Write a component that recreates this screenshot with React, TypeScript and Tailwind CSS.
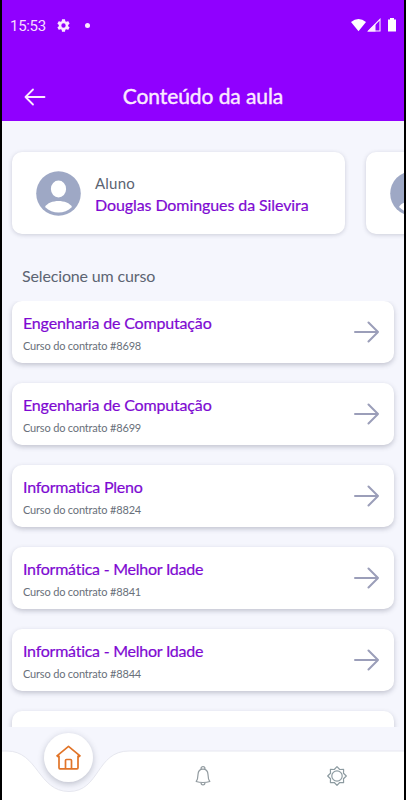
import React from "react";

const courses = [
  { name: "Engenharia de Computação", id: "8698", ls: "tracking-[-0.17px]" },
  { name: "Engenharia de Computação", id: "8699", ls: "tracking-[-0.17px]" },
  { name: "Informatica Pleno", id: "8824", ls: "tracking-[-0.23px]" },
  { name: "Informática - Melhor Idade", id: "8841", ls: "tracking-[-0.25px]" },
  { name: "Informática - Melhor Idade", id: "8844", ls: "tracking-[-0.25px]" },
];

function Avatar() {
  return (
    <svg className="h-[45px] w-[45px] shrink-0" viewBox="0 0 45 45">
      <circle cx="22.5" cy="22.5" r="22.3" fill="#9ea8c5" />
      <ellipse cx="22.5" cy="18" rx="7.6" ry="8.4" fill="#fff" />
      <path d="M9 36C11 32 17 30 22.5 30S34 32 36 36C32 40 27.500 41.500 22.500 41.500S13 40 9 36Z" fill="#fff" />
    </svg>
  );
}

function StatusBar() {
  return (
    <div className="flex h-[50px] items-center pl-[8px] pr-[7px] text-white">
      <span className="mt-[2px] w-[37px] whitespace-nowrap font-['Roboto',sans-serif] text-[15px] leading-5 tracking-[-0.3px] text-[#f6dcff]">15:53</span>
      <svg className="ml-[9px] h-[15px] w-[15px]" viewBox="0 0 24 24" fill="#fbeaff">
        <path d="M19.430 13a7.800 7.800 0 0 0 0-2l2.100-1.650a.5.500 0 0 0 .12-.64l-2-3.460a.5.500 0 0 0-.61-.22l-2.490 1a7.300 7.300 0 0 0-1.690-.98l-.38-2.650A.5.500 0 0 0 14 2h-4a.5.500 0 0 0-.49.420l-.38 2.650c-.61.250-1.170.59-1.690.98l-2.490-1a.5.500 0 0 0-.61.220l-2 3.460a.5.500 0 0 0 .12.640L4.570 11a7.900 7.900 0 0 0 0 2l-2.110 1.650a.5.500 0 0 0-.12.640l2 3.460c.12.220.39.300.61.220l2.490-1c.52.400 1.080.73 1.690.98l.38 2.650c.03.240.24.420.49.420h4c.25 0 .46-.18.490-.42l.38-2.650c.61-.25 1.170-.59 1.690-.98l2.490 1c.23.090.49 0 .61-.22l2-3.460a.5.500 0 0 0-.12-.64ZM12 15.500a3.500 3.500 0 1 1 0-7 3.500 3.500 0 0 1 0 7Z" />
      </svg>
      <span className="ml-[14px] h-[5px] w-[5px] rounded-full bg-[#fbeaff]" />
      <svg className="ml-auto h-[14px] w-[46px]" viewBox="0 0 46 14">
        <path d="M0 4Q7.500-2 15 4L7.500 13.300Z" fill="#fff" />
        <path d="M17.500 13 29 1.300V13Z" fill="none" stroke="#fbeaff" strokeWidth="1.100" />
        <path d="M16.500 13.500 24.500 5.500V13.500Z" fill="#fbeaff" />
        <path d="M37 1.500H39V0H43V1.500H45V13.500H37Z" fill="#fff" />
      </svg>
    </div>
  );
}

function CourseCard({ name, id, ls }: { name: string; id: string; ls: string }) {
  return (
    <div className="flex h-[62px] shrink-0 items-center justify-between rounded-[10px] bg-white pl-[11px] pr-[15px] shadow-[0_2px_5px_rgba(60,65,90,0.28)]">
      <div>
        <div className={"mt-px whitespace-nowrap text-[16px] leading-[22px] text-[#7e09d2] [-webkit-text-stroke:0.2px_#7e09d2] " + ls}>{name}</div>
        <div className="mt-[4px] whitespace-nowrap text-[11px] leading-4 tracking-[-0.17px] text-[#69707a]">Curso do contrato #{id}</div>
      </div>
      <svg className="h-[22px] w-[25px]" viewBox="0 0 25 22" fill="none" stroke="#9b9eb9" strokeWidth="2" strokeLinecap="round" strokeLinejoin="round">
        <path d="M1 11H24M14.500 1.500 24 11 14.500 20.500" />
      </svg>
    </div>
  );
}

function BottomNav() {
  return (
    <div className="relative h-[73px] shrink-0">
      <svg className="h-[73px] w-[402px]" viewBox="0 0 402 73">
        <path d="M-1 24H5C36 24 36 64.500 67 64.500S94 24 127 24H403V74H-1Z" fill="#fff" stroke="#e6e7ef" strokeWidth="1" />
      </svg>
      <div className="absolute left-[42px] top-[6px] flex h-[49px] w-[49px] items-center justify-center rounded-full bg-white shadow-[0_2px_6px_rgba(60,65,90,0.3)]">
        <svg className="h-[25px] w-[25px]" viewBox="0 0 25 25" fill="none" stroke="#e17428" strokeWidth="1.700" strokeLinejoin="round" strokeLinecap="round">
          <path d="M3 12.200 1 10.800 12.500 1.300 24 10.800 22 12.200M3 11V22.800Q3 23.800 4 23.800H21Q22 23.800 22 22.800V11M9.500 23.500V15.500Q9.500 14.500 10.500 14.500H14.500Q15.500 14.500 15.500 15.500V23.500" />
        </svg>
      </div>
      <svg className="absolute left-[193px] top-[39px] h-5 w-4" viewBox="0 0 16 20" fill="none" stroke="#929ba0" strokeWidth="1.200" strokeLinejoin="round">
        <path d="M6 2.700a2 2 0 1 1 4 0M1.200 15.500C2.900 13.500 2.900 12 3 8.500C3.200 5 5 3.200 8 3.200S12.800 5 13 8.500C13.100 12 13.100 13.500 14.800 15.500Q12 16.500 8 16.500T1.200 15.500ZM6 16.600Q6 19 8 19T10 16.600" />
      </svg>
      <svg className="absolute left-[325px] top-[39px] h-5 w-5" viewBox="0 0 20 20" fill="none" stroke="#8d9ba1" strokeWidth="1.200" strokeLinejoin="round">
        <path d="M10 .700 12.700 3.500 16.600 3.400 16.500 7.300 19.300 10 16.500 12.700 16.600 16.600 12.700 16.500 10 19.300 7.300 16.500 3.400 16.600 3.500 12.700.700 10 3.500 7.300 3.400 3.400 7.300 3.500Z" />
        <circle cx="10" cy="10" r="5.200" />
      </svg>
    </div>
  );
}

export default function App() {
  return (
    <div className="h-[800px] w-[406px] overflow-hidden bg-black pl-[2px] pr-[2px] font-['Lato',sans-serif]">
      <div className="flex h-full w-[402px] flex-col overflow-hidden bg-[#f5f6fd]">
        <header className="h-[121px] shrink-0 bg-[#9000ff]">
          <StatusBar />
          <div className="grid h-[71px] grid-cols-[60px_1fr_60px] items-center pt-[22px]">
            <svg className="ml-[22px] h-[18px] w-[22px]" viewBox="0 0 22 18" fill="none" stroke="#fbeaff" strokeWidth="1.800" strokeLinecap="round" strokeLinejoin="round">
              <path d="M20.500 9H1.500M9 1.500 1.500 9 9 16.500" />
            </svg>
            <h1 className="-mt-[2px] whitespace-nowrap text-center text-[21px] leading-7 tracking-[-0.08px] text-[#fbeaff] [-webkit-text-stroke:0.4px_#fbeaff]">Conteúdo da aula</h1>
          </div>
        </header>
        <div className="flex h-[134px] shrink-0 gap-[21px] overflow-hidden pl-[10px] pt-[31px]">
          <div className="flex h-[82px] w-[333px] shrink-0 items-center rounded-[10px] bg-white pl-[24px] shadow-[0_1px_4px_rgba(60,65,90,0.22)]">
            <Avatar />
            <div className="ml-[14px]">
              <div className="mt-px text-[15px] leading-[21px] tracking-[0.2px] text-[#5c6472]">Aluno</div>
              <div className="whitespace-nowrap text-[16px] leading-[21px] tracking-[-0.09px] text-[#7e09d2] [-webkit-text-stroke:0.2px_#7e09d2]">Douglas Domingues da Silevira</div>
            </div>
          </div>
          <div className="flex h-[82px] w-[333px] shrink-0 items-center rounded-[10px] bg-white pl-[24px] shadow-[0_1px_4px_rgba(60,65,90,0.22)]">
            <Avatar />
          </div>
        </div>
        <h2 className="mt-[10px] h-[36px] shrink-0 whitespace-nowrap pl-[20px] text-[16px] leading-[22px] tracking-[-0.15px] text-[#5c6472]">Selecione um curso</h2>
        <main className="flex h-[426px] shrink-0 flex-col gap-5 overflow-hidden px-[10px]">
          {courses.map((c) => <CourseCard key={c.id} {...c} />)}
          <div className="h-[62px] shrink-0 rounded-[10px] bg-white shadow-[0_2px_5px_rgba(60,65,90,0.28)]" />
        </main>
        <BottomNav />
      </div>
    </div>
  );
}
